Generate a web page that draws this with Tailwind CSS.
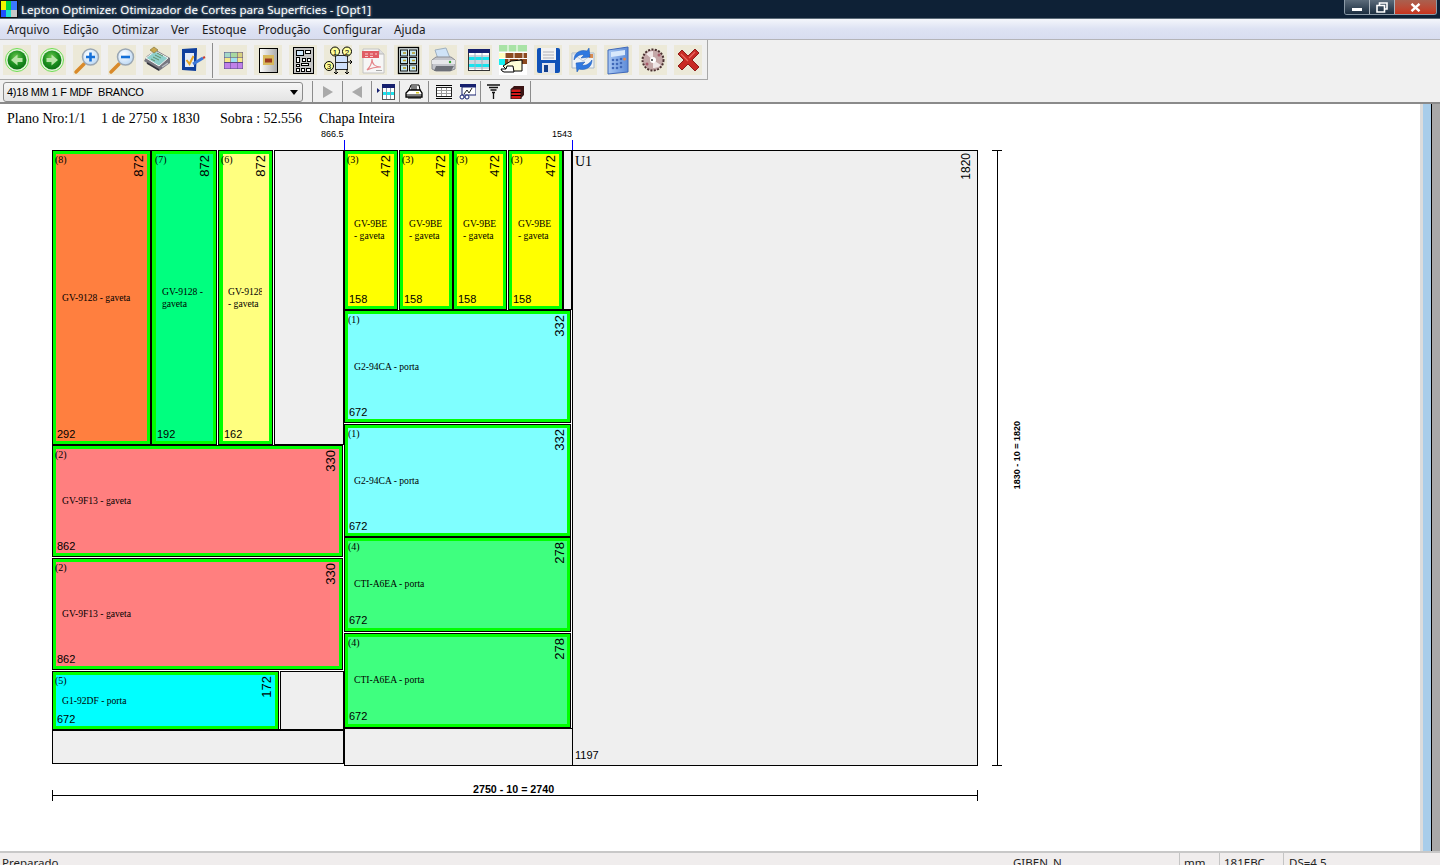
<!DOCTYPE html>
<html lang="pt">
<head>
<meta charset="utf-8">
<title>Lepton Optimizer</title>
<script src="https://cdn.jsdelivr.net/npm/@tailwindcss/browser@4"></script>
</head>
<body class="m-0 w-[1440px] h-[865px] overflow-hidden bg-[#f0f0f0] font-['Noto_Sans',sans-serif] text-black">
<svg width="0" height="0" class="absolute">
  <defs>
    <radialGradient id="gr" cx="45%" cy="35%" r="70%"><stop offset="0" stop-color="#6cc850"/><stop offset=".55" stop-color="#1c9020"/><stop offset="1" stop-color="#0a6b12"/></radialGradient>
    <radialGradient id="lens" cx="40%" cy="35%" r="75%"><stop offset="0" stop-color="#ffffff"/><stop offset="1" stop-color="#b4d4f4"/></radialGradient>
    <linearGradient id="sheet" x1="0" x2="1"><stop offset="0" stop-color="#ffffff"/><stop offset="1" stop-color="#a8a8a8"/></linearGradient>
    <linearGradient id="calc" x1="0" x2="1"><stop offset="0" stop-color="#a9c8f4"/><stop offset="1" stop-color="#5d8bd8"/></linearGradient>
  </defs>
</svg>

<!-- title bar -->
<header class="flex h-[19px] items-start bg-[#0e2136] border-b border-[#5b6b78]">
  <svg width="18" height="18" viewBox="0 0 18 18" class="shrink-0">
    <rect width="18" height="18" fill="#111"/>
    <rect x="1" y="1" width="5" height="9" fill="#f4f400"/><rect x="6" y="1" width="5" height="9" fill="#00d24a"/><rect x="11" y="1" width="6" height="9" fill="#3a78ff"/>
    <rect x="1" y="10" width="5" height="7" fill="#2050ff"/><rect x="6" y="10" width="5" height="7" fill="#20e0d0"/><rect x="11" y="10" width="6" height="7" fill="#c8c8c8"/>
  </svg>
  <span class="ml-[3px] text-[11.6px] leading-[19px] text-white whitespace-nowrap [text-shadow:0_0_3px_#9fb4c8]">Lepton Optimizer. Otimizador de Cortes para Superfícies - [Opt1]</span>
  <div class="ml-auto mr-[3px] flex h-[15px] w-[93px] overflow-hidden rounded-b-[3px] border border-t-0 border-[#8a99a6]">
    <div class="flex w-[25px] items-center justify-center border-r border-[#aab4bd] bg-gradient-to-b from-[#5b6b7a] to-[#1c2e40]"><div class="mt-[4px] h-[3px] w-[10px] bg-white"></div></div>
    <div class="flex w-[25px] items-center justify-center border-r border-[#aab4bd] bg-gradient-to-b from-[#5b6b7a] to-[#1c2e40]">
      <svg width="12" height="11" viewBox="0 0 12 11"><path d="M3.5 3V1h7.5v6H9M1 3.5h7.5v6.5H1z" fill="none" stroke="#fff" stroke-width="1.6"/></svg>
    </div>
    <div class="flex flex-1 items-center justify-center bg-gradient-to-b from-[#a9604f] to-[#c8321c]">
      <svg width="11" height="9" viewBox="0 0 11 9"><path d="M1.5 .8l8 7.4M9.5 .8l-8 7.4" stroke="#fff" stroke-width="2.4"/></svg>
    </div>
  </div>
</header>

<!-- menu -->
<nav class="flex h-[21px] items-center border-b border-[#b4b4b8] bg-gradient-to-b from-[#f4f6fb] via-[#dde2f3] to-[#d8ddf0] pl-[7px] pt-px text-[11.7px] leading-[19px] text-[#1a1a1a]">
  <span class="w-[56px]">Arquivo</span><span class="w-[49px]">Edição</span><span class="w-[59px]">Otimizar</span><span class="w-[31px]">Ver</span><span class="w-[56px]">Estoque</span><span class="w-[65px]">Produção</span><span class="w-[71px]">Configurar</span><span>Ajuda</span>
</nav>

<!-- main toolbar -->
<div class="flex h-[40px] w-[708px] items-start gap-[7px] border-r border-b border-[#a8a8a8] pl-[3px] pt-[5px]">
  <div class="h-[30px] w-[28px] bg-[#ece9d8]"><svg width="28" height="30" viewBox="0 0 28 30"><circle cx="14" cy="15" r="11.5" fill="#e4f5dc" stroke="#6fdc55"/><circle cx="14" cy="15" r="9.5" fill="url(#gr)"/><path d="M19.5 13h-5v-3.500L8 15l6.500 5.500V17h5z" fill="#b8e4a8"/></svg></div>
  <div class="h-[30px] w-[28px] bg-[#ece9d8]"><svg width="28" height="30" viewBox="0 0 28 30"><circle cx="14" cy="15" r="11.500" fill="#e4f5dc" stroke="#6fdc55"/><circle cx="14" cy="15" r="9.500" fill="url(#gr)"/><path d="M8.500 13h5v-3.500L20 15l-6.500 5.500V17h-5z" fill="#b8e4a8"/></svg></div>
  <div class="h-[30px] w-[28px] bg-[#ece9d8]"><svg width="28" height="30" viewBox="0 0 28 30"><path d="M3 27L11 19" stroke="#d98a2a" stroke-width="3.500" stroke-linecap="round"/><circle cx="17.500" cy="12" r="8" fill="url(#lens)" stroke="#9aa7b4" stroke-width="1.500"/><path d="M17.500 7.500v9M13 12h9" stroke="#1470d8" stroke-width="2.600"/></svg></div>
  <div class="h-[30px] w-[28px] bg-[#ece9d8]"><svg width="28" height="30" viewBox="0 0 28 30"><path d="M3 27L11 19" stroke="#d98a2a" stroke-width="3.500" stroke-linecap="round"/><circle cx="17.500" cy="12" r="8" fill="url(#lens)" stroke="#9aa7b4" stroke-width="1.500"/><path d="M13 12h9" stroke="#1470d8" stroke-width="2.600"/></svg></div>
  <div class="h-[30px] w-[28px] bg-[#ece9d8]"><svg width="28" height="30" viewBox="0 0 28 30"><path d="M1 16l3-5 9-6 14 8 0 5-11 8z" fill="#77777f"/><path d="M3 13L12 6l13 7-9 8z" fill="#8fd0cc" stroke="#f4f4f4"/><path d="M7 5l4-3 4 3-4 3z" fill="#c8a850" stroke="#7a6a30" stroke-width=".6"/><path d="M12 10l6 3M10 12l6 3M8 14l4 2M14 8l6 3" stroke="#5f8f6a"/><path d="M4 18l12 7" stroke="#33333b" stroke-width="1.500"/><path d="M19 22l6-4" stroke="#b9bcc4" stroke-width="1.500"/></svg></div>
  <div class="h-[30px] w-[28px] bg-[#ece9d8]"><svg width="28" height="30" viewBox="0 0 28 30"><path d="M4 4l15-1v3l-1 20-14-1z" fill="#0f3f9c"/><path d="M7 8h9v14H7z" fill="#e4ecf8"/><path d="M8.500 15l3 4 4-8" fill="none" stroke="#e5a526" stroke-width="2"/><path d="M15 19l10-6" stroke="#3d78d8" stroke-width="3"/><path d="M25 13l2-1" stroke="#c8403a" stroke-width="2"/></svg></div>
  <div class="mx-[-1px] mt-[-2px] h-[35px] w-px shrink-0 bg-[#8c8c8c]"></div>
  <div class="h-[30px] w-[28px] bg-[#ece9d8]"><svg width="28" height="30" viewBox="0 0 28 30"><rect x="5" y="7" width="19" height="17" fill="#5b4a86"/><path d="M5.500 7.500h6v5h-6z" fill="#a5d8c8"/><path d="M12 7.500h6v5h-6z" fill="#a8d8a0"/><path d="M18.500 7.500h5v5h-5z" fill="#d8d080"/><path d="M5.500 13h6v4h-6zM18.500 13h5v4h-5z" fill="#f5e88a"/><path d="M12 13h6v4h-6z" fill="#a0e0f0"/><path d="M5.500 18h6v5.500h-6zM12 18h6v5.500h-6zM18.500 18h5v5.500h-5z" fill="#c080e8"/></svg></div>
  <div class="h-[30px] w-[28px] bg-[#ece9d8]"><svg width="28" height="30" viewBox="0 0 28 30"><rect x="5.500" y="3.500" width="18" height="24" fill="url(#sheet)" stroke="#000"/><rect x="9" y="10" width="11" height="10" fill="#d8b85c"/><rect x="11" y="13.500" width="7" height="4" fill="#9c3a20"/></svg></div>
  <div class="h-[30px] w-[28px] bg-[#ece9d8]"><svg width="28" height="30" viewBox="0 0 28 30"><rect x="4.500" y="2.500" width="20" height="26" fill="#c4c4c4" stroke="#000"/><g fill="#fff" stroke="#000"><rect x="7.500" y="5.500" width="7" height="5" fill="#cfe6fa"/><rect x="16.500" y="5.500" width="5" height="3"/><rect x="7.500" y="12.500" width="3" height="5"/><rect x="13.500" y="13.500" width="3" height="3"/><rect x="18.500" y="13.500" width="3" height="3"/><rect x="12.500" y="18.500" width="7" height="2"/><rect x="7.500" y="19.500" width="3" height="2"/><rect x="7.500" y="23.500" width="3" height="3"/><rect x="12.500" y="23.500" width="3" height="3"/><rect x="17.500" y="23.500" width="4" height="3"/></g></svg></div>
  <div class="h-[30px] w-[28px] bg-[#ece9d8]"><svg width="28" height="30" viewBox="0 0 28 30"><rect x="11.500" y="10.500" width="12" height="14" fill="#cfe0fb" stroke="#2a2a2a"/><path d="M11.500 17.500h12" stroke="#2a2a2a"/><path d="M12 24v5M10 27l2 2 2-2M23 24v5M21 27l2 2 2-2M24 17h4M26 15l2 2-2 2" stroke="#000" fill="none"/><g fill="#ffff99" stroke="#000"><circle cx="11" cy="6.500" r="4.500"/><circle cx="23" cy="6.500" r="4.500"/><circle cx="5" cy="21" r="4.500"/></g><g font-family="'Liberation Sans',sans-serif" font-size="8" text-anchor="middle" fill="#000"><text x="11" y="9.500">1</text><text x="23" y="9.500">2</text><text x="5" y="24">3</text></g></svg></div>
  <div class="h-[30px] w-[28px] bg-[#ece9d8]"><svg width="28" height="30" viewBox="0 0 28 30"><path d="M4 4h16l5 5v19H4z" fill="#f6f6f6" stroke="#c4c4c4"/><path d="M20 4v5h5" fill="#dedede" stroke="#b8b8b8"/><path d="M3 6h17v7H3z" fill="#e05c64"/><path d="M6 9h3M11 9h3M16 9h2M6 11.500h3M11 11.500h3" stroke="#f8d0d0" stroke-width="1.200"/><path d="M8 25c3-3 5-8 5-11 0 5 3 8 9 8-5 0-10 1-14 3z" fill="none" stroke="#e4858a" stroke-width="1.200"/><path d="M17 25.500h6" stroke="#a8a8a8"/></svg></div>
  <div class="h-[30px] w-[28px] bg-[#ece9d8]"><svg width="28" height="30" viewBox="0 0 28 30"><rect x="4.500" y="2.500" width="20" height="26" fill="#dbe6e6" stroke="#000" stroke-width="1.300"/><g fill="#c4e6f0" stroke="#111"><rect x="6.500" y="5" width="7" height="6"/><rect x="15.500" y="5" width="7" height="6"/><rect x="6.500" y="12.500" width="7" height="6"/><rect x="15.500" y="12.500" width="7" height="6"/><rect x="6.500" y="20" width="7" height="6"/><rect x="15.500" y="20" width="7" height="6"/></g><path d="M9 8h3M18 8h3M9 15.500h3M18 15.500h3M9 23h3M18 23h3" stroke="#b89a20" stroke-width="1.500"/></svg></div>
  <div class="h-[30px] w-[28px] bg-[#ece9d8]"><svg width="28" height="30" viewBox="0 0 28 30"><path d="M9 14L6 5l11-2 4 10z" fill="#cfe3f7" stroke="#9fb0c0"/><path d="M3 15l4-3h15l4 3v9l-5 2H7l-4-2z" fill="#c4c6cc" stroke="#8a8c92"/><path d="M3 15h23v4H3z" fill="#e6e7ea"/><path d="M7 21l-2 5h17l3-5z" fill="#6d7078"/><circle cx="21" cy="17" r="1.200" fill="#33a033"/></svg></div>
  <div class="h-[30px] w-[28px] bg-[#ece9d8]"><svg width="28" height="30" viewBox="0 0 28 30"><rect x="4.500" y="4.500" width="21" height="21" fill="#fff" stroke="#333"/><rect x="4" y="4" width="22" height="4" fill="#16206e"/><rect x="5" y="12" width="20" height="3" fill="#19e3ee"/><rect x="5" y="19" width="20" height="3" fill="#19e3ee"/><path d="M5 11h20M5 16h20M5 18h20M5 23h20M11 8v17M18 8v17" stroke="#9fb0c0"/></svg></div>
  <div class="h-[30px] w-[28px] bg-white"><svg width="28" height="30" viewBox="0 0 28 30"><rect width="28" height="7" fill="#a9e3a6"/><path d="M0 7h9V0M9 7h9V0M18 7h10" fill="none" stroke="#fff"/><rect y="8" width="28" height="5" fill="#8c4a20"/><rect y="14" width="28" height="5" fill="#8c4a20"/><path d="M6 8v5M15 8v5M24 8v5M10 14v5M20 14v5" stroke="#fff"/><rect y="8" width="6" height="5" fill="#ffffc0"/><rect y="14" width="6" height="6" fill="#18f0f0"/><path d="M4 21l8-5 11-1v11H9z" fill="#ffffd8" stroke="#000"/><path d="M2 24h5l1-3h6l1 6H5l-2-1z" fill="#fff" stroke="#000"/><rect x="24" y="20" width="4" height="6" fill="#fff"/></svg></div>
  <div class="h-[30px] w-[28px] bg-[#ece9d8]"><svg width="28" height="30" viewBox="0 0 28 30"><path d="M3 5a2 2 0 012-2h19a2 2 0 012 2v21a2 2 0 01-2 2H5a2 2 0 01-2-2z" fill="#1052b8"/><rect x="7" y="3" width="15" height="12" fill="#f2f2f2"/><path d="M9 7h11M9 10h11M9 13h11" stroke="#b0b0b8"/><rect x="8" y="18" width="13" height="10" fill="#e0e4ee"/><rect x="10" y="20" width="4" height="7" fill="#123e8a"/></svg></div>
  <div class="h-[30px] w-[28px] bg-[#ece9d8]"><svg width="28" height="30" viewBox="0 0 28 30"><path d="M3 8h22v15H3z" fill="#eef2f6" stroke="#aab8c8"/><path d="M3 8l11 8 11-8" fill="none" stroke="#c4ced8"/><path d="M20 9h4v4h-4z" fill="#d88b50"/><path d="M5 15C5 8 11 4 18 6l2-3 1 9-9 1 3-3c-4-1-7 1-10 5z" fill="#2f78e0" stroke="#1754b0" stroke-width=".5"/><path d="M23 15c0 7-6 11-13 9l-2 3-1-9 9-1-3 3c4 1 7-1 10-5z" fill="#2f78e0" stroke="#1754b0" stroke-width=".5"/></svg></div>
  <div class="h-[30px] w-[28px] bg-[#ece9d8]"><svg width="28" height="30" viewBox="0 0 28 30"><path d="M4 5l20-3v25L4 29z" fill="url(#calc)" stroke="#4068b8"/><path d="M7 7l14-2v5L7 12z" fill="#d8e8fb"/><g fill="#3f68b8"><circle cx="9" cy="15" r="1.300"/><circle cx="13" cy="15" r="1.300"/><circle cx="17" cy="14" r="1.300"/><circle cx="9" cy="19" r="1.300"/><circle cx="13" cy="19" r="1.300"/><circle cx="17" cy="18" r="1.300"/><circle cx="9" cy="23" r="1.300"/><circle cx="13" cy="23" r="1.300"/><circle cx="17" cy="22" r="1.300"/></g><circle cx="20.500" cy="14" r="1.500" fill="#e08a50"/></svg></div>
  <div class="h-[30px] w-[28px] bg-[#ece9d8]"><svg width="28" height="30" viewBox="0 0 28 30"><circle cx="14" cy="15" r="10.500" fill="#c4a8a8" stroke="#4a3030" stroke-width="2" stroke-dasharray="2 1.400"/><path d="M14 15L7 9a9 9 0 0 1 7-3zM14 15l8 5a9 9 0 0 1-8 3z" fill="#efe6e6"/><circle cx="14" cy="15" r="3" fill="#fff"/><circle cx="13" cy="15" r="1" fill="#333"/><circle cx="8" cy="19" r="1.500" fill="#a85a6a"/><circle cx="20" cy="10" r="1.500" fill="#a85a6a"/></svg></div>
  <div class="h-[30px] w-[28px] bg-[#ece9d8]"><svg width="28" height="30" viewBox="0 0 28 30"><path d="M4 9l4-4 6 6 7-7 4 4-7 7 7 7-4 4-7-7-6 6-4-4 6-6z" fill="#c82a24" stroke="#8e1c18"/><path d="M7 9l7 7M21 7l-6 6" stroke="#e86860" stroke-width="1.200"/></svg></div>
</div>

<!-- second toolbar -->
<div class="flex h-[24px] items-start border-b-2 border-[#8a8a8a]">
  <div class="ml-[3px] mt-[2px] flex h-[20px] w-[300px] items-center justify-between rounded-[3px] border border-[#8b8b8b] bg-gradient-to-b from-[#f6f6f6] to-[#e4e4e4] pl-[3px] pr-[4px] pt-px font-['Liberation_Sans',sans-serif] text-[11px] tracking-[-0.25px] whitespace-pre">4)18 MM 1 F MDF  BRANCO<svg width="8" height="5" viewBox="0 0 8 5"><path d="M0 0h8L4 5z" fill="#000"/></svg></div>
  <div class="ml-[9px] mt-px flex h-[21px] items-start text-[0]">
    <div class="flex h-[21px] w-[30px] items-center justify-center border-l border-[#8c8c8c]"><svg width="12" height="12" viewBox="0 0 12 12"><path d="M1 0l10 6-10 6z" fill="#a9a9a9"/></svg></div>
    <div class="flex h-[21px] w-[29px] items-center justify-center border-l border-[#8c8c8c]"><svg width="12" height="12" viewBox="0 0 12 12"><path d="M11 0L1 6l10 6z" fill="#a9a9a9"/></svg></div>
    <div class="flex h-[21px] w-[28px] items-center justify-center border-l border-[#8c8c8c]"><svg width="18" height="16" viewBox="0 0 18 16"><rect x="5.500" y="3.500" width="12" height="12" fill="#fff" stroke="#555"/><rect x="5" y="0" width="13" height="4" fill="#16206e"/><rect x="6" y="8" width="11" height="3" fill="#19e3ee"/><path d="M9.500 4v11M13.500 4v11" stroke="#8a9aa8"/><path d="M0 4l3 2.500L0 9z" fill="#16206e"/></svg></div>
    <div class="flex h-[21px] w-[29px] items-center justify-center border-l border-[#8c8c8c]"><svg width="18" height="16" viewBox="0 0 18 16"><path d="M4 6l2-5h8l1 5" fill="#fff" stroke="#000"/><path d="M1 9l3-3h11l2 3v4H1z" fill="#fff" stroke="#000" stroke-width="1.300"/><path d="M1 11h16M3 14h13M6 3h6M6 5h6" stroke="#000"/><rect x="11" y="8" width="3" height="1.500" fill="#d8c820"/></svg></div>
    <div class="flex h-[21px] w-[52px] items-center gap-[6px] border-l border-[#8c8c8c] pl-[6px]"><svg width="18" height="14" viewBox="0 0 18 14"><path d="M1 .5h16M1 13.500h16" stroke="#000"/><rect x="1.500" y="2.500" width="15" height="9" fill="#fff" stroke="#222"/><path d="M2 5.500h14M2 8.500h14M6.500 3v8M11.500 3v8" stroke="#9a9a9a"/></svg><svg width="17" height="16" viewBox="0 0 17 16"><rect x="1" y="0" width="16" height="3" fill="#16206e"/><rect x="3" y="3" width="14" height="8" fill="#fff" stroke="#16206e"/><path d="M5 10l3-4 2 3 3-5" fill="none" stroke="#222"/><circle cx="3" cy="13" r="2" fill="#fff" stroke="#16206e"/><circle cx="8" cy="13" r="2" fill="#fff" stroke="#16206e"/><path d="M5 13h1" stroke="#16206e"/></svg></div>
    <div class="flex h-[21px] w-[51px] items-center gap-[10px] border-l border-r border-[#8c8c8c] pl-[6px]"><svg width="13" height="15" viewBox="0 0 13 15"><path d="M0 1h13M2 3.500h9M3.500 6h6M5 8.500h3M6.500 9v6" stroke="#111" stroke-width="1.300" fill="none"/></svg><svg width="15" height="14" viewBox="0 0 15 14"><path d="M1 4h10v10H1z" fill="#d41818" stroke="#222"/><path d="M1 4l3-3h10l-3 3zM11 4l3-3v9l-3 3z" fill="#3a1414"/><path d="M1 7.500h10M1 10.500h10" stroke="#000"/></svg></div>
  </div>
</div>

<!-- main -->
<div class="flex h-[747px]">
  <main class="relative h-full w-[1423px] overflow-hidden border-r-[3px] border-[#dcdcdc] bg-white font-['Liberation_Serif',serif]">
    <div class="flex pl-[7px] pt-[6px] text-[14px] leading-[17px] whitespace-nowrap">
      <span class="w-[94px]">Plano Nro:1/1</span><span class="w-[119px] tracking-[0.1px]">1 de 2750 x 1830</span><span class="w-[99px]">Sobra : 52.556</span><span>Chapa Inteira</span>
    </div>

    <!-- position markers -->
    <span class="absolute left-[321px] top-[25px] font-['Liberation_Sans',sans-serif] text-[9px] leading-[10px]">866.5</span>
    <span class="absolute left-[552px] top-[25px] font-['Liberation_Sans',sans-serif] text-[9px] leading-[10px]">1543</span>
    <div class="absolute left-[344px] top-[36px] h-[10px] w-px bg-[#0000ff]"></div>
    <div class="absolute left-[572px] top-[36px] h-[10px] w-px bg-[#0000ff]"></div>

    <!-- leftovers -->
    <div class="absolute left-[274px] top-[46px] h-[295px] w-[70px] border border-black bg-[#efefef]"></div>
    <div class="absolute left-[563px] top-[46px] h-[160px] w-[9px] border border-black bg-[#efefef]"></div>
    <div class="absolute left-[280px] top-[567px] h-[59px] w-[64px] border border-black bg-[#efefef]"></div>
    <div class="absolute left-[52px] top-[625px] h-[35px] w-[292px] border border-t-2 border-black bg-[#efefef]"></div>
    <div class="absolute left-[344px] top-[624px] h-[38px] w-[229px] border border-black bg-[#efefef]"></div>
    <div class="absolute left-[572px] top-[46px] h-[616px] w-[406px] border border-black bg-[#efefef] font-['Liberation_Serif',serif]">
      <span class="absolute left-[2px] top-[3px] text-[14px] leading-[16px]">U1</span>
      <span class="absolute right-[5px] top-[2px] rotate-180 font-['Liberation_Sans',sans-serif] text-[12px] leading-[12px] [writing-mode:vertical-rl]">1820</span>
      <span class="absolute bottom-[4px] left-[2px] font-['Liberation_Sans',sans-serif] text-[11px] leading-[12px]">1197</span>
    </div>

    <!-- pieces: orange -->
    <div class="absolute left-[52px] top-[46px] h-[295px] w-[99px] bg-black">
      <div class="absolute inset-px border-[3px] border-[#00ff00] bg-[#ff7f3f]"></div>
      <span class="absolute left-[3px] top-[4px] text-[10px] leading-[11px]">(8)</span>
      <span class="absolute right-[6px] top-[5px] rotate-180 font-['Liberation_Sans',sans-serif] text-[13px] leading-[13px] [writing-mode:vertical-rl]">872</span>
      <span class="absolute left-[10px] top-[142px] text-[9.6px] leading-[12px] whitespace-nowrap">GV-9128 - gaveta</span>
      <span class="absolute bottom-[5px] left-[5px] font-['Liberation_Sans',sans-serif] text-[11px] leading-[11px]">292</span>
    </div>
    <div class="absolute left-[151px] top-[46px] h-[295px] w-[66px] bg-black">
      <div class="absolute inset-px border-[3px] border-l-4 border-[#00ff00] bg-[#00ff7f]"></div>
      <span class="absolute left-[4px] top-[4px] text-[10px] leading-[11px]">(7)</span>
      <span class="absolute right-[6px] top-[5px] rotate-180 font-['Liberation_Sans',sans-serif] text-[13px] leading-[13px] [writing-mode:vertical-rl]">872</span>
      <span class="absolute left-[11px] top-[136px] text-[9.6px] leading-[12px] whitespace-nowrap">GV-9128 -<br>gaveta</span>
      <span class="absolute bottom-[5px] left-[6px] font-['Liberation_Sans',sans-serif] text-[11px] leading-[11px]">192</span>
    </div>
    <div class="absolute left-[218px] top-[46px] h-[295px] w-[55px] bg-black">
      <div class="absolute inset-px border-[3px] border-l-4 border-[#00ff00] bg-[#ffff7f]"></div>
      <span class="absolute left-[3px] top-[4px] text-[10px] leading-[11px]">(6)</span>
      <span class="absolute right-[6px] top-[5px] rotate-180 font-['Liberation_Sans',sans-serif] text-[13px] leading-[13px] [writing-mode:vertical-rl]">872</span>
      <span class="absolute left-[10px] top-[136px] w-[34px] overflow-hidden text-[9.6px] leading-[12px] whitespace-nowrap">GV-9128<br>- gaveta</span>
      <span class="absolute bottom-[5px] left-[6px] font-['Liberation_Sans',sans-serif] text-[11px] leading-[11px]">162</span>
    </div>

    <!-- pieces: yellow -->
    <div class="absolute left-[344px] top-[46px] h-[160px] w-[54px] bg-black">
      <div class="absolute inset-px border-[3px] border-[#00ff00] bg-[#ffff00]"></div>
      <span class="absolute left-[3px] top-[4px] text-[10px] leading-[11px]">(3)</span>
      <span class="absolute right-[6px] top-[5px] rotate-180 font-['Liberation_Sans',sans-serif] text-[13px] leading-[13px] [writing-mode:vertical-rl]">472</span>
      <span class="absolute left-[10px] top-[68px] text-[9.6px] leading-[12px] whitespace-nowrap">GV-9BE<br>- gaveta</span>
      <span class="absolute bottom-[5px] left-[5px] font-['Liberation_Sans',sans-serif] text-[11px] leading-[11px]">158</span>
    </div>
    <div class="absolute left-[399px] top-[46px] h-[160px] w-[54px] bg-black">
      <div class="absolute inset-px border-[3px] border-[#00ff00] bg-[#ffff00]"></div>
      <span class="absolute left-[3px] top-[4px] text-[10px] leading-[11px]">(3)</span>
      <span class="absolute right-[6px] top-[5px] rotate-180 font-['Liberation_Sans',sans-serif] text-[13px] leading-[13px] [writing-mode:vertical-rl]">472</span>
      <span class="absolute left-[10px] top-[68px] text-[9.6px] leading-[12px] whitespace-nowrap">GV-9BE<br>- gaveta</span>
      <span class="absolute bottom-[5px] left-[5px] font-['Liberation_Sans',sans-serif] text-[11px] leading-[11px]">158</span>
    </div>
    <div class="absolute left-[453px] top-[46px] h-[160px] w-[54px] bg-black">
      <div class="absolute inset-px border-[3px] border-[#00ff00] bg-[#ffff00]"></div>
      <span class="absolute left-[3px] top-[4px] text-[10px] leading-[11px]">(3)</span>
      <span class="absolute right-[6px] top-[5px] rotate-180 font-['Liberation_Sans',sans-serif] text-[13px] leading-[13px] [writing-mode:vertical-rl]">472</span>
      <span class="absolute left-[10px] top-[68px] text-[9.6px] leading-[12px] whitespace-nowrap">GV-9BE<br>- gaveta</span>
      <span class="absolute bottom-[5px] left-[5px] font-['Liberation_Sans',sans-serif] text-[11px] leading-[11px]">158</span>
    </div>
    <div class="absolute left-[508px] top-[46px] h-[160px] w-[55px] bg-black">
      <div class="absolute inset-px border-[3px] border-[#00ff00] bg-[#ffff00]"></div>
      <span class="absolute left-[3px] top-[4px] text-[10px] leading-[11px]">(3)</span>
      <span class="absolute right-[6px] top-[5px] rotate-180 font-['Liberation_Sans',sans-serif] text-[13px] leading-[13px] [writing-mode:vertical-rl]">472</span>
      <span class="absolute left-[10px] top-[68px] text-[9.6px] leading-[12px] whitespace-nowrap">GV-9BE<br>- gaveta</span>
      <span class="absolute bottom-[5px] left-[5px] font-['Liberation_Sans',sans-serif] text-[11px] leading-[11px]">158</span>
    </div>

    <!-- pieces: light cyan -->
    <div class="absolute left-[344px] top-[206px] h-[113px] w-[227px] bg-black">
      <div class="absolute inset-px border-[3px] border-[#00ff00] bg-[#7fffff]"></div>
      <span class="absolute left-[4px] top-[4px] text-[10px] leading-[11px]">(1)</span>
      <span class="absolute right-[5px] top-[5px] rotate-180 font-['Liberation_Sans',sans-serif] text-[13px] leading-[13px] [writing-mode:vertical-rl]">332</span>
      <span class="absolute left-[10px] top-[51px] text-[9.6px] leading-[12px] whitespace-nowrap">G2-94CA - porta</span>
      <span class="absolute bottom-[5px] left-[5px] font-['Liberation_Sans',sans-serif] text-[11px] leading-[11px]">672</span>
    </div>
    <div class="absolute left-[344px] top-[320px] h-[113px] w-[227px] bg-black">
      <div class="absolute inset-px border-[3px] border-[#00ff00] bg-[#7fffff]"></div>
      <span class="absolute left-[4px] top-[4px] text-[10px] leading-[11px]">(1)</span>
      <span class="absolute right-[5px] top-[5px] rotate-180 font-['Liberation_Sans',sans-serif] text-[13px] leading-[13px] [writing-mode:vertical-rl]">332</span>
      <span class="absolute left-[10px] top-[51px] text-[9.6px] leading-[12px] whitespace-nowrap">G2-94CA - porta</span>
      <span class="absolute bottom-[5px] left-[5px] font-['Liberation_Sans',sans-serif] text-[11px] leading-[11px]">672</span>
    </div>

    <!-- pieces: green -->
    <div class="absolute left-[344px] top-[433px] h-[95px] w-[227px] bg-black">
      <div class="absolute inset-px border-[3px] border-[#00ff00] bg-[#3fff7f]"></div>
      <span class="absolute left-[4px] top-[4px] text-[10px] leading-[11px]">(4)</span>
      <span class="absolute right-[5px] top-[5px] rotate-180 font-['Liberation_Sans',sans-serif] text-[13px] leading-[13px] [writing-mode:vertical-rl]">278</span>
      <span class="absolute left-[10px] top-[41px] text-[9.6px] leading-[12px] whitespace-nowrap">CTI-A6EA - porta</span>
      <span class="absolute bottom-[6px] left-[5px] font-['Liberation_Sans',sans-serif] text-[11px] leading-[11px]">672</span>
    </div>
    <div class="absolute left-[344px] top-[529px] h-[95px] w-[227px] bg-black">
      <div class="absolute inset-px border-[3px] border-[#00ff00] bg-[#3fff7f]"></div>
      <span class="absolute left-[4px] top-[4px] text-[10px] leading-[11px]">(4)</span>
      <span class="absolute right-[5px] top-[5px] rotate-180 font-['Liberation_Sans',sans-serif] text-[13px] leading-[13px] [writing-mode:vertical-rl]">278</span>
      <span class="absolute left-[10px] top-[41px] text-[9.6px] leading-[12px] whitespace-nowrap">CTI-A6EA - porta</span>
      <span class="absolute bottom-[6px] left-[5px] font-['Liberation_Sans',sans-serif] text-[11px] leading-[11px]">672</span>
    </div>

    <!-- pieces: red -->
    <div class="absolute left-[52px] top-[341px] h-[112px] w-[291px] bg-black">
      <div class="absolute inset-px border-[3px] border-[#00ff00] bg-[#ff7f7f]"></div>
      <span class="absolute left-[3px] top-[4px] text-[10px] leading-[11px]">(2)</span>
      <span class="absolute right-[6px] top-[5px] rotate-180 font-['Liberation_Sans',sans-serif] text-[13px] leading-[13px] [writing-mode:vertical-rl]">330</span>
      <span class="absolute left-[10px] top-[50px] text-[9.6px] leading-[12px] whitespace-nowrap">GV-9F13 - gaveta</span>
      <span class="absolute bottom-[5px] left-[5px] font-['Liberation_Sans',sans-serif] text-[11px] leading-[11px]">862</span>
    </div>
    <div class="absolute left-[52px] top-[454px] h-[112px] w-[291px] bg-black">
      <div class="absolute inset-px border-[3px] border-[#00ff00] bg-[#ff7f7f]"></div>
      <span class="absolute left-[3px] top-[4px] text-[10px] leading-[11px]">(2)</span>
      <span class="absolute right-[6px] top-[5px] rotate-180 font-['Liberation_Sans',sans-serif] text-[13px] leading-[13px] [writing-mode:vertical-rl]">330</span>
      <span class="absolute left-[10px] top-[50px] text-[9.6px] leading-[12px] whitespace-nowrap">GV-9F13 - gaveta</span>
      <span class="absolute bottom-[5px] left-[5px] font-['Liberation_Sans',sans-serif] text-[11px] leading-[11px]">862</span>
    </div>

    <!-- piece: cyan -->
    <div class="absolute left-[52px] top-[567px] h-[59px] w-[227px] bg-black">
      <div class="absolute inset-px border-[3px] border-[#00ff00] bg-[#00ffff]"></div>
      <span class="absolute left-[3px] top-[4px] text-[10px] leading-[11px]">(5)</span>
      <span class="absolute right-[6px] top-[5px] rotate-180 font-['Liberation_Sans',sans-serif] text-[13px] leading-[13px] [writing-mode:vertical-rl]">172</span>
      <span class="absolute left-[10px] top-[24px] text-[9.6px] leading-[12px] whitespace-nowrap">G1-92DF - porta</span>
      <span class="absolute bottom-[5px] left-[5px] font-['Liberation_Sans',sans-serif] text-[11px] leading-[11px]">672</span>
    </div>

    <!-- dimensions -->
    <div class="absolute left-[992px] top-[46px] h-px w-[10px] bg-black"></div>
    <div class="absolute left-[997px] top-[46px] h-[616px] w-px bg-black"></div>
    <div class="absolute left-[992px] top-[661px] h-px w-[10px] bg-black"></div>
    <span class="absolute left-[1012px] top-[317px] rotate-180 font-['Liberation_Sans',sans-serif] text-[9px] font-bold leading-[10px] whitespace-nowrap [writing-mode:vertical-rl]">1830 - 10 = 1820</span>
    <div class="absolute left-[52px] top-[691px] h-px w-[926px] bg-black"></div>
    <div class="absolute left-[52px] top-[686px] h-[11px] w-px bg-black"></div>
    <div class="absolute left-[977px] top-[686px] h-[11px] w-px bg-black"></div>
    <span class="absolute left-[473px] top-[679px] font-['Liberation_Sans',sans-serif] text-[10.7px] font-bold leading-[12px] whitespace-nowrap">2750 - 10 = 2740</span>
  </main>
  <div class="w-[8px] bg-[#a8cdea]"></div>
  <div class="w-px bg-black"></div>
  <div class="flex-1 bg-[#a8a8a8]"></div>
</div>

<!-- status bar -->
<footer class="flex h-[14px] overflow-hidden border-t-2 border-[#c8c8c8] bg-[#f0eded] text-[11.5px] leading-[19px] text-[#222]">
  <span class="w-[1013px] pl-[2px]">Preparado</span>
  <span class="w-[166px]">GIBEN_N</span>
  <span class="w-[40px] border-l border-[#c4c4c4] pl-[4px]">mm</span>
  <span class="w-[64px] border-l border-[#c4c4c4] pl-[4px]">181EBC</span>
  <span class="w-[156px] border-l border-[#c4c4c4] pl-[5px]">DS=4.5</span>
</footer>
</body>
</html>
